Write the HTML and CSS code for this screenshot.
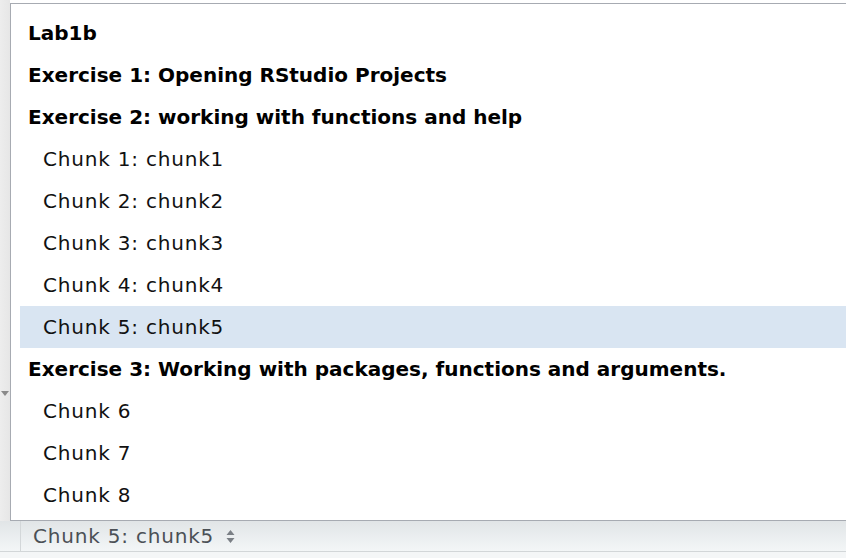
FILE: index.html
```html
<!DOCTYPE html>
<html>
<head>
<meta charset="utf-8">
<link rel="stylesheet" href="styles.css">
</head>
<body>
<div class="app">
  <div class="main">
    <div class="gutter"><span class="marker"></span></div>
    <div class="popup">
      <div class="row head">Lab1b</div>
      <div class="row head">Exercise 1: Opening RStudio Projects</div>
      <div class="row head">Exercise 2: working with functions and help</div>
      <div class="row chunk">Chunk 1: chunk1</div>
      <div class="row chunk">Chunk 2: chunk2</div>
      <div class="row chunk">Chunk 3: chunk3</div>
      <div class="row chunk">Chunk 4: chunk4</div>
      <div class="row chunk selected">Chunk 5: chunk5</div>
      <div class="row head">Exercise 3: Working with packages, functions and arguments.</div>
      <div class="row chunk">Chunk 6</div>
      <div class="row chunk">Chunk 7</div>
      <div class="row chunk">Chunk 8</div>
    </div>
  </div>
  <div class="status">
    <div class="status-left"></div>
    <div class="status-label">Chunk 5: chunk5
      <svg class="updown" width="9" height="15" viewBox="0 0 9 15"><path d="M4.5 1 L8.5 6 L0.5 6 Z M0.5 9 L8.5 9 L4.5 14 Z" fill="#7a7f85"/></svg>
    </div>
  </div>
  <div class="bottom"></div>
</div>
</body>
</html>
```
FILE: styles.css
```css
* { box-sizing: border-box; }
html, body { margin: 0; padding: 0; }
body {
  width: 846px;
  height: 558px;
  overflow: hidden;
  background: #ffffff;
  font-family: "DejaVu Sans", "Open Sans", sans-serif;
}
.app {
  width: 846px;
  height: 558px;
  display: flex;
  flex-direction: column;
}
.main {
  display: flex;
  flex-direction: row;
  padding-top: 3px;
  background: linear-gradient(#ffffff, #fafafa);
}
.gutter {
  width: 10px;
  flex: none;
  background: linear-gradient(90deg, #ededed, #e6e6e6);
  display: flex;
  flex-direction: column;
  align-items: center;
  padding-top: 391px;
  margin-top: -3px;
}
.marker {
  width: 0;
  height: 0;
  border-left: 4px solid transparent;
  border-right: 4px solid transparent;
  border-top: 5px solid #8a8a8a;
}
.popup {
  flex: 1;
  border-top: 1px solid #a7abb2;
  border-left: 1px solid #a7abb2;
  border-bottom: 1px solid #a7abb2;
  background: #ffffff;
  padding: 8px 0 4px 0;
  display: flex;
  flex-direction: column;
}
.row {
  height: 42px;
  display: flex;
  align-items: center;
  font-size: 20px;
  color: #000;
  white-space: nowrap;
}
.head {
  font-weight: bold;
  padding-left: 17px;
}
.chunk {
  margin-left: 9px;
  padding-left: 23px;
  color: #111;
  letter-spacing: 0.8px;
}
.selected {
  background: #d9e5f2;
}
.status {
  height: 31px;
  display: flex;
  flex-direction: row;
  background: linear-gradient(#e1e5e7, #f3f6f7);
  border-bottom: 1px solid #d2d6d8;
}
.status-left {
  width: 21px;
  border-right: 1px solid #d3d7d9;
}
.status-label {
  display: flex;
  align-items: center;
  padding-left: 12px;
  font-size: 20px;
  letter-spacing: 0.8px;
  color: #4b5056;
}
.updown {
  margin-left: 12px;
}
.bottom {
  flex: 1;
  background: #f4f6f7;
}
```
